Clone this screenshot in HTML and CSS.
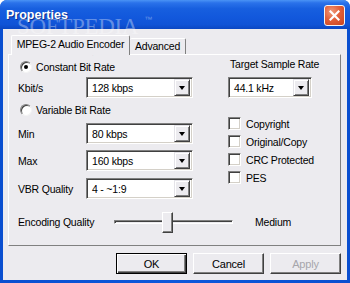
FILE: index.html
```html
<!DOCTYPE html>
<html>
<head>
<meta charset="utf-8">
<link rel="stylesheet" href="styles.css">
</head>
<body>
<div class="window">
  <div class="titlebar">
    <span class="title">Properties</span>
    <div class="close">
      <svg width="11" height="11" viewBox="0 0 11 11"><path d="M1.5 1.5 L9.5 9.5 M9.5 1.5 L1.5 9.5" stroke="#fff" stroke-width="2.2" stroke-linecap="square"/></svg>
    </div>
  </div>
  <div class="client">
    <div class="tabs">
      <div class="tab active">MPEG-2 Audio Encoder</div>
      <div class="tab">Advanced</div>
    </div>
    <div class="panel">
      <div class="cols">
        <div class="left">
          <div class="radio-row r1"><span class="radio checked"></span><span>Constant Bit Rate</span></div>
          <div class="field"><span class="lbl">Kbit/s</span><div class="combo"><span class="val">128 kbps</span><span class="drop"><span class="arrow"></span></span></div></div>
          <div class="radio-row r2"><span class="radio"></span><span>Variable Bit Rate</span></div>
          <div class="field f-min"><span class="lbl">Min</span><div class="combo"><span class="val">80 kbps</span><span class="drop"><span class="arrow"></span></span></div></div>
          <div class="field f-max"><span class="lbl">Max</span><div class="combo"><span class="val">160 kbps</span><span class="drop"><span class="arrow"></span></span></div></div>
          <div class="field f-vbr"><span class="lbl">VBR Quality</span><div class="combo"><span class="val">4 - ~1:9</span><span class="drop"><span class="arrow"></span></span></div></div>
        </div>
        <div class="right">
          <div class="rtitle">Target Sample Rate</div>
          <div class="combo small"><span class="val">44.1 kHz</span><span class="drop"><span class="arrow"></span></span></div>
          <div class="checks">
            <div class="check-row"><span class="check"></span><span>Copyright</span></div>
            <div class="check-row"><span class="check"></span><span>Original/Copy</span></div>
            <div class="check-row"><span class="check"></span><span>CRC Protected</span></div>
            <div class="check-row"><span class="check"></span><span>PES</span></div>
          </div>
        </div>
      </div>
      <div class="quality">
        <span class="qlbl">Encoding Quality</span>
        <div class="slider"><div class="track"></div><div class="thumb"></div></div>
        <span class="qval">Medium</span>
      </div>
    </div>
    <div class="buttons">
      <div class="btn default">OK</div>
      <div class="btn">Cancel</div>
      <div class="btn disabled">Apply</div>
    </div>
  </div>
  <div class="wm">SOFTPEDIA<span class="tm">™</span></div>
  <div class="wm-url">www.softpedia.com</div>
</div>
</body>
</html>
```

FILE: styles.css
```css
html, body {
  margin: 0;
  padding: 0;
}
body {
  width: 350px;
  height: 283px;
  overflow: hidden;
  background: #ffffff;
  font-family: "Liberation Sans", Arial, sans-serif;
  font-size: 10.5px;
  letter-spacing: -0.2px;
  color: #000;
}
.window {
  position: relative;
  width: 350px;
  height: 283px;
  display: flex;
  flex-direction: column;
  background: linear-gradient(to right, #0a4fd0, #0d58dc 50%, #0a4fd0);
  border-radius: 7px 7px 0 0;
  overflow: hidden;
}
.titlebar {
  height: 29px;
  flex: none;
  display: flex;
  align-items: center;
  justify-content: space-between;
  padding: 0 5px 0 6px;
  background: linear-gradient(to bottom, #4a93f5 0%, #2a72ea 10%, #175fdf 30%, #1258dc 60%, #1053d6 85%, #0b47c2 100%);
}
.title {
  font-weight: bold;
  font-size: 12.5px;
  color: #fff;
  text-shadow: 1px 1px 0 #0e2f8c;
  letter-spacing: 0;
}
.close {
  width: 21px;
  height: 21px;
  box-sizing: border-box;
  border: 1px solid #f4f4f4;
  border-radius: 3px;
  background: radial-gradient(circle at 35% 30%, #f09a7a 0%, #e2603a 45%, #c8421e 100%);
  display: flex;
  align-items: center;
  justify-content: center;
  margin-top: 1px;
}
.client {
  flex: 1;
  margin: 0 3px 3px 3px;
  background: #ecebef;
  padding: 6px 6px 0 5px;
  display: flex;
  flex-direction: column;
}
.tabs {
  display: flex;
  align-items: flex-end;
  height: 19px;
  padding-left: 3px;
  position: relative;
  z-index: 1;
}
.tab {
  box-sizing: border-box;
  height: 16px;
  width: 56px;
  border-top: 1px solid #fff;
  border-right: 1px solid #808080;
  border-radius: 2px 2px 0 0;
  background: #ecebef;
  text-align: center;
  line-height: 15px;
  white-space: nowrap;
}
.tab.active {
  height: 20px;
  width: 119px;
  margin-bottom: -1px;
  border-left: 1px solid #fff;
  line-height: 17px;
  padding-bottom: 2px;
}
.panel {
  height: 192px;
  box-sizing: border-box;
  border: 1px solid;
  border-color: #fff #808080 #808080 #fff;
  padding-left: 9px;
}
.cols {
  display: flex;
}
.left {
  width: 175px;
  display: flex;
  flex-direction: column;
  padding-top: 2px;
}
.radio-row {
  height: 20px;
  display: flex;
  align-items: center;
  gap: 4px;
  padding-left: 2px;
}
.r2 { margin-top: 2px; }
.radio {
  width: 12px;
  height: 12px;
  box-sizing: border-box;
  border-radius: 50%;
  border: 1px solid;
  border-color: #808080 #f4f4f4 #f4f4f4 #808080;
  box-shadow: inset 1px 1px 0 #404040;
  background: #fff;
  position: relative;
}
.radio.checked::after {
  content: "";
  position: absolute;
  left: 3px;
  top: 3px;
  width: 4px;
  height: 4px;
  border-radius: 50%;
  background: #000;
}
.field {
  display: flex;
  align-items: center;
  height: 21px;
}
.f-min { margin-top: 3px; }
.f-max { margin-top: 6px; }
.f-vbr { margin-top: 7px; }
.lbl {
  width: 68px;
  flex: none;
}
.combo {
  width: 108px;
  height: 21px;
  box-sizing: border-box;
  border: 1px solid;
  border-color: #808080 #fff #fff #808080;
  box-shadow: inset 1px 1px 0 #404040, inset -1px -1px 0 #d4d0c8;
  background: #fff;
  display: flex;
  align-items: center;
  justify-content: space-between;
  padding: 2px;
}
.combo.small {
  width: 84px;
  margin-top: 6px;
}
.val {
  padding-left: 3px;
}
.drop {
  width: 16px;
  height: 17px;
  box-sizing: border-box;
  background: #ecebef;
  border: 1px solid;
  border-color: #e4e3e8 #404040 #404040 #e4e3e8;
  box-shadow: inset 1px 1px 0 #fff, inset -1px -1px 0 #808080;
  display: flex;
  align-items: center;
  justify-content: center;
}
.arrow {
  width: 0;
  height: 0;
  border-left: 3.5px solid transparent;
  border-right: 3.5px solid transparent;
  border-top: 4px solid #000;
  margin-top: 1px;
}
.right {
  margin-left: 35px;
  width: 84px;
  padding-top: 2px;
  display: flex;
  flex-direction: column;
}
.rtitle {
  height: 14px;
  line-height: 14px;
  padding-left: 2px;
  white-space: nowrap;
}
.checks {
  margin-top: 19px;
  display: flex;
  flex-direction: column;
  gap: 5px;
}
.check-row {
  height: 13px;
  display: flex;
  align-items: center;
  gap: 5px;
  white-space: nowrap;
}
.check {
  width: 13px;
  height: 13px;
  flex: none;
  box-sizing: border-box;
  border: 1px solid;
  border-color: #808080 #fff #fff #808080;
  box-shadow: inset 1px 1px 0 #404040, inset -1px -1px 0 #d4d0c8;
  background: #fff;
}
.quality {
  margin-top: 12px;
  height: 22px;
  display: flex;
  align-items: center;
}
.qlbl {
  width: 96px;
  flex: none;
}
.slider {
  position: relative;
  width: 119px;
  height: 22px;
  flex: none;
}
.track {
  position: absolute;
  left: 0;
  right: 0;
  top: 9px;
  height: 4px;
  box-sizing: border-box;
  border: 1px solid;
  border-color: #808080 #fff #fff #808080;
  box-shadow: inset 1px 1px 0 #404040;
  background: #ecebef;
}
.thumb {
  position: absolute;
  left: 48px;
  top: 1px;
  width: 11px;
  height: 21px;
  box-sizing: border-box;
  background: #ecebef;
  border: 1px solid;
  border-color: #fff #404040 #404040 #fff;
  box-shadow: inset -1px -1px 0 #808080;
}
.qval {
  margin-left: 22px;
}
.buttons {
  margin-top: 7px;
  display: flex;
  justify-content: flex-end;
  gap: 6px;
}
.btn {
  width: 71px;
  height: 21px;
  box-sizing: border-box;
  background: #ecebef;
  border: 1px solid;
  border-color: #fff #404040 #404040 #fff;
  box-shadow: inset -1px -1px 0 #808080;
  display: flex;
  align-items: center;
  justify-content: center;
  font-size: 11px;
}
.btn.default {
  border-color: #000;
  box-shadow: inset 1px 1px 0 #fff, inset -1px -1px 0 #404040, inset -2px -2px 0 #808080;
}
.btn.disabled {
  color: #a6a6ab;
}
.wm {
  position: absolute;
  left: 17px;
  top: 15px;
  font-family: "Liberation Serif", "Times New Roman", serif;
  font-size: 23px;
  letter-spacing: -0.3px;
  color: rgba(255, 255, 255, 0.35);
  pointer-events: none;
  line-height: 23px;
}
.wm .tm {
  font-family: "Liberation Sans", Arial, sans-serif;
  font-size: 8px;
  vertical-align: top;
  margin-left: 6px;
  line-height: 10px;
}
.wm-url {
  position: absolute;
  left: 60px;
  top: 47px;
  font-size: 8px;
  letter-spacing: 0;
  color: rgba(0, 0, 0, 0.07);
  pointer-events: none;
}
```
